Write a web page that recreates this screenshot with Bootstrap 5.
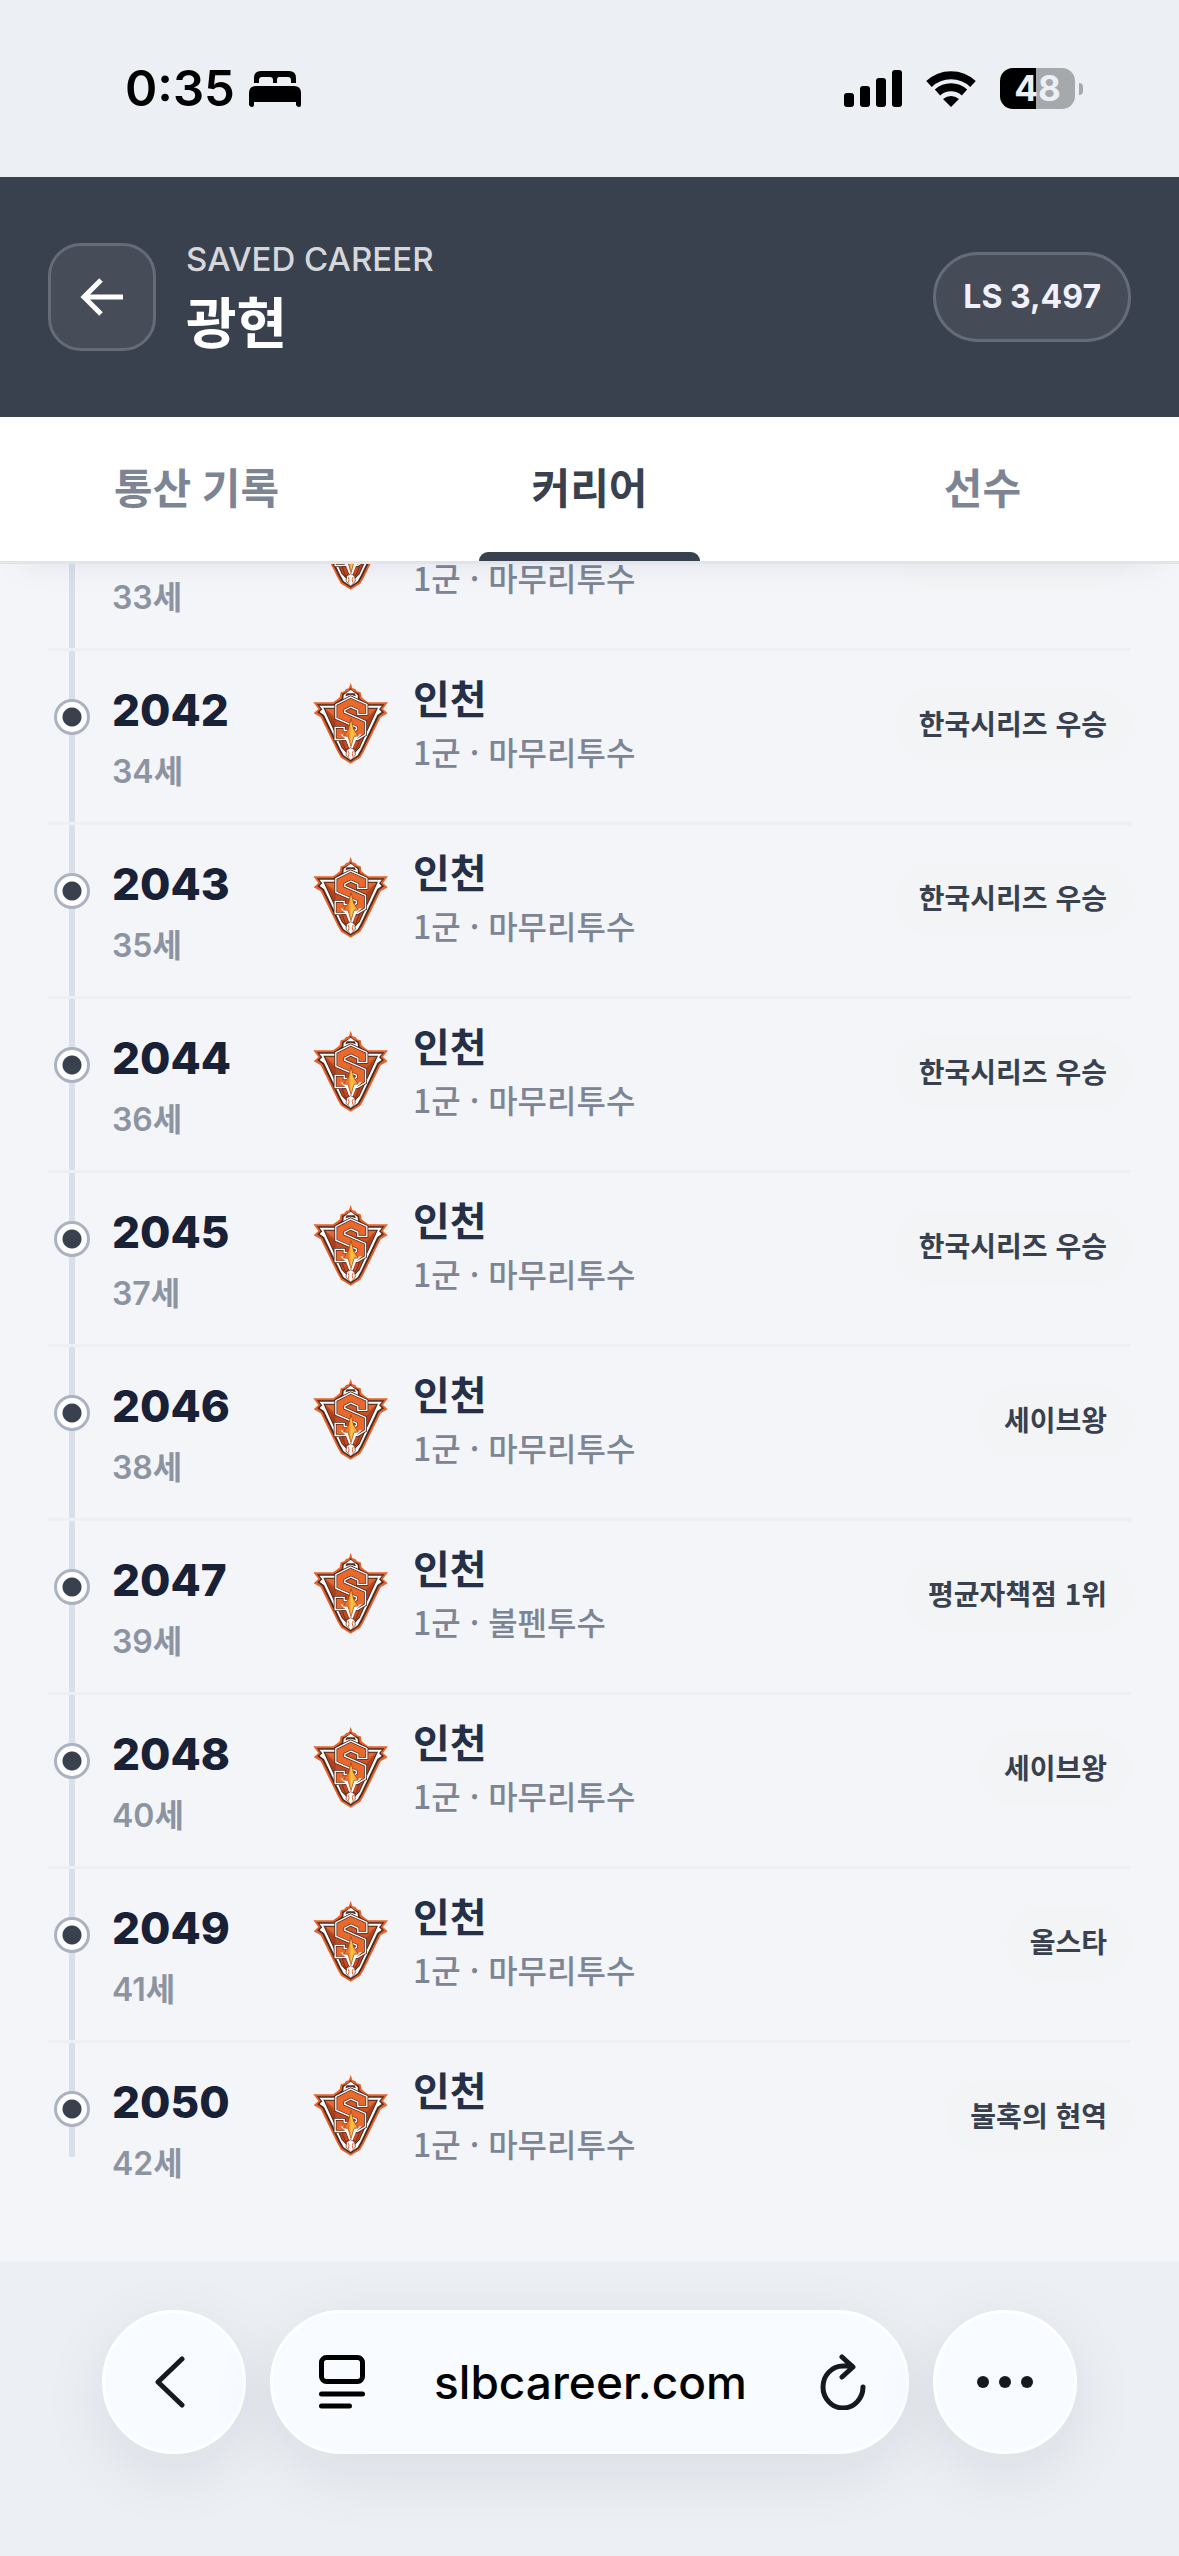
<!DOCTYPE html>
<html lang="ko">
<head>
<meta charset="utf-8">
<meta name="viewport" content="width=device-width, initial-scale=1">
<title>광현 - 커리어</title>
<link rel="stylesheet" href="https://cdn.jsdelivr.net/npm/bootstrap@5.3.0/dist/css/bootstrap.min.css">
<style>
  :root { --slate: #39414f; --muted: #7d8595; --chrome: #ecf0f5; }
  body { font-family: Inter, "Noto Sans CJK KR", sans-serif; background: #f4f5f9; color: #253047; }
  svg { display: block; flex: none; }

  .status-bar { height: 177px; padding: 0 96px 0 125px; background: var(--chrome); color: #000; }
  .clock { font-size: 49px; line-height: 60px; font-weight: 600; }
  .bed { margin-left: 14px; }
  .battery { width: 75px; height: 41px; border-radius: 13px; background: linear-gradient(90deg, #000 48%, #a5a9ac 48%); color: var(--chrome); font-size: 35px; line-height: 41px; font-weight: 700; }
  .battery-tip { width: 4px; height: 12px; border-radius: 0 6px 6px 0; background: #a5a9ac; }

  .app-head { height: 240px; padding: 0 48px; background: var(--slate); color: #fff; }
  .head-back { width: 108px; height: 108px; border: 3px solid #656b78; border-radius: 33px; background: #474c59; color: #fff; }
  .head-text { padding: 4px 0 0 30px; }
  .eyebrow { font-size: 33px; line-height: 40px; font-weight: 500; color: #d6d7da; }
  .player-name { margin-top: 8px; font-size: 55px; line-height: 72px; font-weight: 700; }
  .score { height: 90px; padding: 0 27px; border: 3px solid #656b78; border-radius: 45px; background: #464b58; color: #f0f0ff; font-size: 32px; font-weight: 700; }

  .tab-strip { border-bottom: 3px solid #e2e4ec; box-shadow: 0 20px 30px -20px rgba(20, 25, 35, .08); z-index: 2; }
  .tab-strip .nav-link { position: relative; height: 144px; padding: 0 0 2px; border-radius: 0; color: var(--muted); font-size: 42px; font-weight: 600; }
  .tab-strip .nav-link.active { color: var(--slate); background: none; font-weight: 700; }
  .tab-strip .nav-link.active::after { content: ""; position: absolute; left: 22%; right: 22%; bottom: 0; height: 9px; border-radius: 9px 9px 0 0; background: var(--slate); }

  .career { min-height: 0; padding: 0 48px 45px; }
  .season { height: 174px; flex: none; border-bottom: 3px solid #eeeff3; }
  .season:last-child { border-bottom: 0; }
  .rail { width: 42px; margin-right: 22px; display: flex; justify-content: center; padding-left: 6px; background: linear-gradient(#d9e0ea, #d9e0ea) 21px 0 / 6px 100% no-repeat; }
  .season:last-child .rail { background-size: 6px 114px; }
  .knot { flex: none; width: 36px; height: 36px; margin-top: 48px; border: 3px solid #abb2c0; border-radius: 50%; background: radial-gradient(circle, var(--slate) 9px, #fff 10px); }
  .when { width: 201px; padding-top: 32px; }
  .year { height: 54px; font-size: 44px; line-height: 54px; font-weight: 800; color: #182136; }
  .age { margin-top: 13px; font-size: 32px; line-height: 44px; font-weight: 600; color: #8c94a2; }
  .crest { width: 76px; height: 82px; margin-top: 31px; margin-right: 24px; }
  .club { padding-top: 22px; }
  .club-name { height: 54px; font-size: 40px; line-height: 54px; font-weight: 700; }
  .club-role { font-size: 32px; line-height: 48px; color: var(--muted); font-family: "Noto Sans CJK KR", sans-serif; font-weight: 500; }
  .award { height: 72px; margin-top: 38px; padding: 0 24px 4px; border-radius: 36px; background: #f3f4f6; color: var(--slate); font-size: 28px; font-weight: 700; font-family: "Noto Sans CJK KR", sans-serif; }
  .award:empty { width: 236px; }

  .browser-bar { height: 294px; padding: 48px 102px 0; background: var(--chrome); gap: 24px; }
  .bubble { height: 144px; border: 3px solid #fff; border-radius: 72px; background: #f8fbff; box-shadow: 0 18px 66px rgba(20, 25, 30, .09); }
  .bubble-round { width: 144px; padding: 0; }
  .address { padding: 0 40px 0 46px; }
  .bare { padding: 0; border: 0; background: none; color: #000; }
  .site { font-size: 46px; line-height: 60px; font-weight: 500; color: #000; text-decoration: none; }
</style>
<script src="https://cdn.jsdelivr.net/npm/bootstrap@5.3.0/dist/js/bootstrap.bundle.min.js"></script>
</head>
<body class="d-flex flex-column vh-100 overflow-hidden">

<svg class="position-absolute" width="0" height="0" aria-hidden="true">
  <defs>
    <linearGradient id="shieldFill" x1="0" y1="0" x2="0" y2="1"><stop offset="0" stop-color="#d95a26"/><stop offset=".5" stop-color="#b8431c"/><stop offset="1" stop-color="#c9481d"/></linearGradient>
    <linearGradient id="flameFill" x1="0" y1="0" x2="1" y2="0"><stop offset=".35" stop-color="#ef7a22"/><stop offset=".55" stop-color="#ffc845"/><stop offset="1" stop-color="#ef8a22"/></linearGradient>
  </defs>
  <symbol id="crest" viewBox="40 36 228 246">
    <path fill="#e8622a" d="M153 38L158 54L168 58L172 64L183 67L186 82L196 90L206 97H265L250 117L264 130L243 142L192 246L182 263L153 281L124 263L114 246L63 142L42 130L56 117L41 97H100L110 90L120 82L123 67L134 64L138 58L148 54Z"/>
    <path fill="#4a2b22" d="M153 53L157 61L166 66L178 71L180 86L204 103H254L243 117L253 127L238 138L188 242L178 259L153 275L128 259L118 242L68 138L53 127L63 117L52 103H102L126 86L128 71L140 66L149 61Z"/>
    <path fill="#fff" d="M153 59L163 67L174 75L175 89L202 107H247L238 118L246 126L233 135L184 238L174 256L153 270L132 256L122 238L73 135L60 126L68 118L59 107H104L131 89L132 75L143 67Z"/>
    <path fill="#4a2b22" d="M141 70H165L169 79L153 74L137 79Z"/>
    <path fill="#4a2b22" d="M71 113H235L180 234L153 262L126 234Z"/>
    <path fill="url(#shieldFill)" d="M76 116H230L178 232L153 257L128 232Z"/>
    <path fill="#8c2f17" opacity=".45" d="M76 116L108 150V187ZM230 116L200 150V183Z"/>
    <path fill="#ef7a3c" opacity=".6" d="M80 118H110L108 140ZM226 118H198L200 140Z"/>
    <g fill="none">
      <path stroke="#4a2b22" stroke-width="36" d="M188 137V112L153 96L122 112V136L184 163V186L169 195H120V168"/>
      <path stroke="#fff" stroke-width="31" d="M188 135V112L153 96L122 112V136L184 163V186L169 195H120V170"/>
      <path stroke="#4a2b22" stroke-width="23" d="M188 131V112L153 96L122 112V136L184 163V186L169 195H120V174"/>
      <path stroke="#ea682c" stroke-width="19" d="M188 129V112L153 96L122 112V136L184 163V186L169 195H120V176"/>
    </g>
    <path fill="#c9481d" stroke="#4a2b22" stroke-width="2" d="M127 212H140L147 234L138 240ZM179 212H166L159 234L168 240Z"/>
    <path fill="#fff" d="M122 193L144 197L154 158L164 197L187 192L169 209L158 238H150L139 209Z"/>
    <path fill="url(#flameFill)" stroke="#8c3a17" stroke-width="2" d="M154 146L162 178L176 198L163 199L154 230L145 199L131 198L146 178Z"/>
    <path fill="#fff" stroke="#4a2b22" stroke-width="2" d="M141 240L153 233L165 240L167 255L153 271L139 255Z"/>
    <path fill="none" stroke="#e8622a" stroke-width="3" d="M145 242q6 9 1 18M161 242q-6 9-1 18"/>
  </symbol>
</svg>

<div class="status-bar flex-shrink-0 d-flex align-items-center justify-content-between">
  <div class="d-flex align-items-center">
    <span class="clock">0:35</span>
    <svg class="bed" width="52" height="36" viewBox="0 0 52 36"><path d="M5 12V7q0-7 7-7h28q7 0 7 7v5h-5V9q0-3-3-3h-9q-2 0-2 3v3h-4V9q0-3-3-3h-8q-3 0-3 3v3z"/><path d="M0 34V22q0-7 7-7h38q7 0 7 7v12q0 2-2 2t-3-2v-3H5v3q0 2-2 2t-3-2z"/></svg>
  </div>
  <div class="d-flex align-items-center">
    <svg class="me-4" width="58" height="38" viewBox="0 0 58 38"><rect y="23" width="10" height="14" rx="3"/><rect x="16" y="16" width="10" height="21" rx="3"/><rect x="32" y="8" width="10" height="29" rx="3"/><rect x="48" width="10" height="37" rx="3"/></svg>
    <svg class="me-4" width="50" height="38" viewBox="0 0 50 38"><g fill="none" stroke="#000" stroke-width="8"><path d="M3 14a32 32 0 0 1 44 0"/><path d="M11.500 22.500a20 20 0 0 1 27 0"/></g><path d="M25 37l-8-8q8-6 16 0z"/></svg>
    <span class="battery text-center">48</span>
    <span class="battery-tip ms-1"></span>
  </div>
</div>

<header class="app-head flex-shrink-0 d-flex align-items-center">
  <button type="button" class="head-back p-0 d-flex align-items-center justify-content-center" aria-label="뒤로">
    <svg width="44" height="38" viewBox="0 0 44 38" fill="none" stroke="currentColor" stroke-width="5"><path d="M43 19H4M21 2L4 19l17 17"/></svg>
  </button>
  <div class="head-text flex-grow-1">
    <div class="eyebrow">SAVED CAREER</div>
    <h1 class="player-name mb-0">광현</h1>
  </div>
  <div class="score d-flex align-items-center">LS 3,497</div>
</header>

<nav class="tab-strip nav nav-pills nav-justified flex-shrink-0 bg-white position-relative">
  <a class="nav-link nav-item d-flex align-items-center justify-content-center" href="#totals">통산 기록</a>
  <a class="nav-link nav-item d-flex align-items-center justify-content-center active" aria-current="page" href="#career">커리어</a>
  <a class="nav-link nav-item d-flex align-items-center justify-content-center" href="#player">선수</a>
</nav>

<main class="career flex-grow-1 d-flex flex-column justify-content-end overflow-hidden" id="career">
  <article class="season d-flex align-items-start">
    <div class="rail align-self-stretch"><span class="knot"></span></div>
    <div class="when"><div class="year"></div><div class="age">33세</div></div>
    <svg class="crest"><use href="#crest"/></svg>
    <div class="club flex-grow-1"><div class="club-name"></div><div class="club-role">1군 · 마무리투수</div></div>
    <span class="award"></span>
  </article>
  <article class="season d-flex align-items-start">
    <div class="rail align-self-stretch"><span class="knot"></span></div>
    <div class="when"><div class="year">2042</div><div class="age">34세</div></div>
    <svg class="crest"><use href="#crest"/></svg>
    <div class="club flex-grow-1"><div class="club-name">인천</div><div class="club-role">1군 · 마무리투수</div></div>
    <span class="award d-flex align-items-center">한국시리즈 우승</span>
  </article>
  <article class="season d-flex align-items-start">
    <div class="rail align-self-stretch"><span class="knot"></span></div>
    <div class="when"><div class="year">2043</div><div class="age">35세</div></div>
    <svg class="crest"><use href="#crest"/></svg>
    <div class="club flex-grow-1"><div class="club-name">인천</div><div class="club-role">1군 · 마무리투수</div></div>
    <span class="award d-flex align-items-center">한국시리즈 우승</span>
  </article>
  <article class="season d-flex align-items-start">
    <div class="rail align-self-stretch"><span class="knot"></span></div>
    <div class="when"><div class="year">2044</div><div class="age">36세</div></div>
    <svg class="crest"><use href="#crest"/></svg>
    <div class="club flex-grow-1"><div class="club-name">인천</div><div class="club-role">1군 · 마무리투수</div></div>
    <span class="award d-flex align-items-center">한국시리즈 우승</span>
  </article>
  <article class="season d-flex align-items-start">
    <div class="rail align-self-stretch"><span class="knot"></span></div>
    <div class="when"><div class="year">2045</div><div class="age">37세</div></div>
    <svg class="crest"><use href="#crest"/></svg>
    <div class="club flex-grow-1"><div class="club-name">인천</div><div class="club-role">1군 · 마무리투수</div></div>
    <span class="award d-flex align-items-center">한국시리즈 우승</span>
  </article>
  <article class="season d-flex align-items-start">
    <div class="rail align-self-stretch"><span class="knot"></span></div>
    <div class="when"><div class="year">2046</div><div class="age">38세</div></div>
    <svg class="crest"><use href="#crest"/></svg>
    <div class="club flex-grow-1"><div class="club-name">인천</div><div class="club-role">1군 · 마무리투수</div></div>
    <span class="award d-flex align-items-center">세이브왕</span>
  </article>
  <article class="season d-flex align-items-start">
    <div class="rail align-self-stretch"><span class="knot"></span></div>
    <div class="when"><div class="year">2047</div><div class="age">39세</div></div>
    <svg class="crest"><use href="#crest"/></svg>
    <div class="club flex-grow-1"><div class="club-name">인천</div><div class="club-role">1군 · 불펜투수</div></div>
    <span class="award d-flex align-items-center">평균자책점 1위</span>
  </article>
  <article class="season d-flex align-items-start">
    <div class="rail align-self-stretch"><span class="knot"></span></div>
    <div class="when"><div class="year">2048</div><div class="age">40세</div></div>
    <svg class="crest"><use href="#crest"/></svg>
    <div class="club flex-grow-1"><div class="club-name">인천</div><div class="club-role">1군 · 마무리투수</div></div>
    <span class="award d-flex align-items-center">세이브왕</span>
  </article>
  <article class="season d-flex align-items-start">
    <div class="rail align-self-stretch"><span class="knot"></span></div>
    <div class="when"><div class="year">2049</div><div class="age">41세</div></div>
    <svg class="crest"><use href="#crest"/></svg>
    <div class="club flex-grow-1"><div class="club-name">인천</div><div class="club-role">1군 · 마무리투수</div></div>
    <span class="award d-flex align-items-center">올스타</span>
  </article>
  <article class="season d-flex align-items-start">
    <div class="rail align-self-stretch"><span class="knot"></span></div>
    <div class="when"><div class="year">2050</div><div class="age">42세</div></div>
    <svg class="crest"><use href="#crest"/></svg>
    <div class="club flex-grow-1"><div class="club-name">인천</div><div class="club-role">1군 · 마무리투수</div></div>
    <span class="award d-flex align-items-center">불혹의 현역</span>
  </article>
</main>

<footer class="browser-bar flex-shrink-0 d-flex align-items-start">
  <button type="button" class="bubble bubble-round flex-shrink-0 d-flex align-items-center justify-content-center" aria-label="이전 페이지">
    <svg class="me-2" width="30" height="52" viewBox="0 0 30 52" fill="none" stroke="#16191d" stroke-width="5" stroke-linecap="round" stroke-linejoin="round"><path d="M27 3L3 26l24 23"/></svg>
  </button>
  <div class="bubble address flex-grow-1 d-flex align-items-center justify-content-between">
    <button type="button" class="bare" aria-label="페이지 메뉴">
      <svg width="46" height="54" viewBox="0 0 46 54" fill="none" stroke="#000" stroke-width="5" stroke-linecap="round"><rect x="2.500" y="2.500" width="41" height="24" rx="5"/><path d="M2.500 39h41M2.500 51h28"/></svg>
    </button>
    <a class="site me-1" href="#career">slbcareer.com</a>
    <button type="button" class="bare" aria-label="새로 고침">
      <svg width="46" height="56" viewBox="0 0 46 56" fill="none" stroke="#16191d" stroke-width="5" stroke-linecap="round" stroke-linejoin="round"><path d="M43 33a20 21 0 1 1-20-21h9M22 3l11 10-11 10"/></svg>
    </button>
  </div>
  <button type="button" class="bubble bubble-round flex-shrink-0 d-flex align-items-center justify-content-center" aria-label="더 보기">
    <svg width="56" height="12" viewBox="0 0 56 12" fill="#16191d"><circle cx="6" cy="6" r="6"/><circle cx="28" cy="6" r="6"/><circle cx="50" cy="6" r="6"/></svg>
  </button>
</footer>
</body>
</html>
